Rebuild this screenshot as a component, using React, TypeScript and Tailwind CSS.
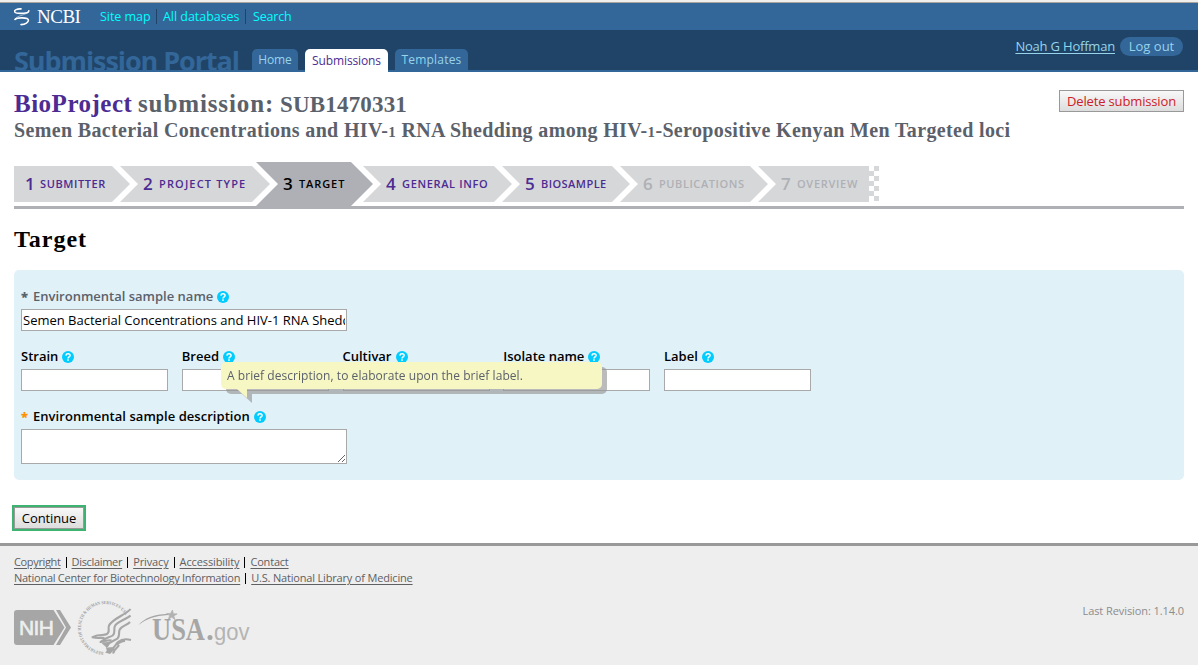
import type { ReactNode } from 'react';

function Help() {
  return (
    <svg className="ml-1 h-3 w-3 shrink-0" viewBox="0 0 12 12">
      <circle cx="6" cy="6" r="6" fill="#00ccff" />
      <path d="M3.9 4.6C4 3.4 4.9 2.8 6 2.8s2.1.7 2.1 1.8c0 1.3-2 1.4-2.1 2.9" fill="none" stroke="#fff" strokeWidth="1.5" />
      <rect x="5.2" y="8.3" width="1.6" height="1.5" fill="#fff" />
    </svg>
  );
}

function Label({ children, className = '' }: { children: ReactNode; className?: string }) {
  return (
    <label className={`flex h-4 items-center text-[13px] font-semibold whitespace-nowrap ${className}`}>
      <span className="flex h-4 pb-px leading-[15px]">{children}</span>
      <Help />
    </label>
  );
}

const field = 'block h-[22px] border border-[#a9a9a9] bg-white px-px text-[13px] outline-none';

const steps = [
  { n: 1, label: 'Submitter', box: 'h-9 w-[116px] pl-[11px] bg-[#d6d7d9] text-[#4c2c92] [clip-path:polygon(0_0,98px_0,116px_50%,98px_100%,0_100%)]', num: 'w-[15px]', track: 'tracking-[0.6px]' },
  { n: 2, label: 'Project type', box: '-ml-[10px] h-9 w-[150px] pl-[23px] bg-[#d6d7d9] text-[#4c2c92] [clip-path:polygon(0_0,132px_0,150px_50%,132px_100%,0_100%,18px_50%)]', num: 'w-4', track: 'tracking-[1.15px]' },
  { n: 3, label: 'Target', box: '-ml-[14px] h-11 w-[117px] pl-[27px] bg-[#aeb0b5] text-black [clip-path:polygon(0_0,95px_0,117px_50%,95px_100%,0_100%,22px_50%)]', num: 'w-[16px]', track: 'tracking-[0.9px]' },
  { n: 4, label: 'General info', box: '-ml-[10px] h-9 w-[149px] pl-[23px] bg-[#d6d7d9] text-[#4c2c92] [clip-path:polygon(0_0,131px_0,149px_50%,131px_100%,0_100%,18px_50%)]', num: 'w-4', track: 'tracking-[0.65px]' },
  { n: 5, label: 'BioSample', box: '-ml-[10px] h-9 w-[128px] pl-[23px] bg-[#d6d7d9] text-[#4c2c92] [clip-path:polygon(0_0,110px_0,128px_50%,110px_100%,0_100%,18px_50%)]', num: 'w-4', track: 'tracking-[0.45px]' },
  { n: 6, label: 'Publications', box: '-ml-[10px] h-9 w-[148px] pl-[23px] bg-[#d6d7d9] text-[#aeb0b5] [clip-path:polygon(0_0,130px_0,148px_50%,130px_100%,0_100%,18px_50%)]', num: 'w-4', track: 'tracking-[0.57px]' },
  { n: 7, label: 'Overview', box: '-ml-[10px] h-9 w-[111px] pl-[23px] bg-[#d6d7d9] text-[#aeb0b5] [clip-path:polygon(0_0,100%_0,100%_100%,0_100%,18px_50%)]', num: 'w-4', track: 'tracking-[0.7px]' },
];

const attributes = ['Strain', 'Breed', 'Cultivar', 'Isolate name', 'Label'];

function NcbiLogo() {
  return (
    <div className="flex w-[68px] items-center">
      <svg className="h-[18px] w-4" viewBox="0 0 16 18" fill="none" stroke="#fff" strokeLinecap="round">
        <path d="M7 .9C3 .6.2 2.200.6 3.600c.5 1.800 5.600 1.900 9 1.700 2.800-.2 5-.8 5.200-2.500" strokeWidth="1.600" />
        <path d="M14.800 3C14.500 7.500 1.500 7 1 11.500" strokeWidth="0.500" />
        <path d="M1 11.500c2-2.300 13-2.200 13.400.5.3 2.300-3 4.500-7.400 4.600" strokeWidth="1.600" />
      </svg>
      <span className="ml-[7px] font-['Liberation_Serif',serif] text-[19px] leading-5 tracking-[-0.5px] text-white">NCBI</span>
    </div>
  );
}

function Seal() {
  return (
    <svg className="ml-[5px] h-14 w-[56px]" viewBox="76 599 56 56">
      <defs>
        <path id="ring" d="M103.400 651.900A24 24 0 1 1 124.600 614.200" />
      </defs>
      <text className="font-['Liberation_Serif',serif]" fontSize="4.600" fontWeight="700" fill="#9c9c9c">
        <textPath href="#ring" textLength="98" lengthAdjust="spacingAndGlyphs">DEPARTMENT OF HEALTH &amp; HUMAN SERVICES·USA</textPath>
      </text>
      <g fill="none" stroke="#a6a6a6" strokeWidth="2.100" strokeLinejoin="round">
        <path d="M130.500 609C127 614 112 619 109 625.500c-1.500 4 1.500 6-2 8.500-3.500 2.200-7-.5-14.500 3.200 5 1.500 8.500.2 12 .8" />
        <path d="M130.500 615.500c-4 4-14 6-15.800 11-1.200 4 1 6.500-2 9-3 2-6.500 1.500-12.200 6.500 5-.8 8-2.500 11-1.500" />
        <path d="M130 622c-3 3.500-9 4-10.500 8-1 4 .5 6-2 8.500-3 2.500-7.500 2-10.500 7.500" />
        <path d="M131 640c-5-1.500-10-.5-13 2-3.500 3-2 6-8 7.500M119 645c-1.500 3-5 4-6 8.500M125 641c-3 0-6 1.500-8 4" />
      </g>
      <path d="M101 642c4 1 7-.5 10-.5-2 2-2 5-4.500 6.500-1-2.500-4-3-5.500-6zM106 648c3-1 7-1 9 1l-5 5-5-1.500c2-1 2-2.500 1-4.500z" fill="#a6a6a6" />
    </svg>
  );
}

function FooterLinks({ links }: { links: { text: string; className: string }[] }) {
  return (
    <div className="flex h-4 items-center">
      {links.map((l, i) => (
        <span key={l.text} className="flex items-center">
          {i > 0 && <span className="mx-[5px] h-[11px] w-px bg-black" />}
          <a className={`whitespace-nowrap underline underline-offset-[1.500px] ${l.className}`}>{l.text}</a>
        </span>
      ))}
    </div>
  );
}

const lowOne = <span className="text-[15px]">1</span>;

export default function App() {
  return (
    <div className="flex h-[665px] w-[1198px] flex-col overflow-hidden bg-white font-['Open_Sans','Noto_Sans',sans-serif] text-[13px] text-black">
      <div className="h-[3px] border-b border-[#aaa49d] bg-[#f0efee]" />
      <div className="flex h-[27px] items-center bg-[#336699] pl-[14px] text-[12.500px] text-[#00ffff]">
        <NcbiLogo />
        <nav className="ml-[18px] flex items-center whitespace-nowrap">
          <a className="w-[50px] pt-0.5 tracking-[-0.05px]">Site map</a>
          <span className="mx-[6px] h-[15px] w-px bg-[#204467]" />
          <a className="w-[77px] pt-0.5 tracking-[-0.040px]">All databases</a>
          <span className="mr-[7px] ml-[5px] h-[15px] w-px bg-[#204467]" />
          <a className="pt-0.5 tracking-[-0.200px]">Search</a>
        </nav>
      </div>

      <header className="flex h-[42px] shrink-0 justify-between border-b-2 border-[#336699] bg-[#204467] pl-[14px]">
        <div className="flex h-[42px]">
          <div className="h-10 w-[238px] overflow-hidden">
            <h1 className="mt-3 text-[27px] leading-[38px] font-bold tracking-[-1.080px] whitespace-nowrap text-[#336699]">Submission Portal</h1>
          </div>
          <nav className="mt-[19px] flex items-start gap-[7px] text-[12px] leading-[21px] text-[#97d4ea]">
            <a className="h-[21px] w-[46px] rounded-t-[5px] bg-[#336699] text-center tracking-[-0.100px]">Home</a>
            <a className="h-[23px] w-[83px] rounded-t-[5px] bg-white text-center leading-[23px] tracking-[-0.120px] text-[#4c2c92]">Submissions</a>
            <a className="h-[21px] w-[73px] rounded-t-[5px] bg-[#336699] text-center tracking-[0.200px]">Templates</a>
          </nav>
        </div>
        <div className="mt-[7px] mr-[15px] flex h-[19px] items-center text-[#97d4ea]">
          <a className="mr-[5px] tracking-[-0.200px] whitespace-nowrap underline underline-offset-2">Noah G Hoffman</a>
          <a className="h-[19px] w-[63px] rounded-full bg-[#336699] text-center leading-[18px]">Log out</a>
        </div>
      </header>

      <main className="flex flex-col px-[14px]">
        <div className="flex justify-between pt-[18px]">
          <div className="font-['Liberation_Serif',serif] font-bold whitespace-nowrap text-[#5b616b]">
            <h2 className="flex h-[28px] items-baseline text-[25px] leading-[27px]">
              <span className="w-[124px] tracking-[0.500px] text-[#4c2c92]">BioProject</span>
              <span className="w-[142px] tracking-[0.880px]">submission:</span>
              <span className="text-[23px] tracking-[0.180px]">SUB1470331</span>
            </h2>
            <h3 className="h-6 text-[20px] leading-6 tracking-[0.348px]">
              Semen Bacterial Concentrations and HIV-{lowOne} RNA Shedding among HIV-{lowOne}-Seropositive Kenyan Men Targeted loci
            </h3>
          </div>
          <button className="h-[22px] w-[125px] border border-[#999] bg-linear-to-b from-[#f8f8f8] to-[#dddddd] text-[13px] leading-5 tracking-[-0.150px] text-[#cd2026]">
            Delete submission
          </button>
        </div>

        <div className="mt-5 border-b-[3px] border-[#aeb0b5]">
          <ol className="flex h-11 items-center">
            {steps.map((s) => (
              <li key={s.n} className={`flex shrink-0 items-center font-semibold whitespace-nowrap ${s.box}`}>
                <span className={`text-[17px] leading-9 ${s.num}`}>{s.n}</span>
                <span className={`text-[11px] leading-9 uppercase ${s.track}`}>{s.label}</span>
              </li>
            ))}
            <li className="h-9 w-[10px] shrink-0">
              <svg className="block h-9 w-[10px]" viewBox="0 0 10 36" fill="#d6d7d9">
                <path d="M5 0h5v5H5zM0 5h5v5H0zM5 10h5v5H5zM0 15h5v5H0zM5 20h5v5H5zM0 25h5v5H0zM5 30h5v5H5z" />
              </svg>
            </li>
          </ol>
        </div>

        <h2 className="mt-4 h-7 font-['Liberation_Serif',serif] text-[24px] leading-7 font-bold tracking-[1px]">Target</h2>

        <section className="mt-[17px] h-[210px] rounded-[5px] bg-[#e1f1f8] px-[7px] pt-[19px]">
          <Label className="text-[#5b616b]">
            <span className="w-3 font-extrabold">*</span>Environmental sample name
          </Label>
          <input className={`mt-1 w-[326px] ${field}`} defaultValue="Semen Bacterial Concentrations and HIV-1 RNA Shedding among HIV-1-Seropositive Kenyan Men Targeted loci" />
          <div className="mt-[18px] flex gap-[13.750px]">
            {attributes.map((a) => (
              <div key={a} className="w-[147px]">
                <Label>{a}</Label>
                <input className={`mt-1 w-[147px] ${field}`} />
              </div>
            ))}
          </div>
          <div className="relative mt-[18px]">
            <Label className="tracking-[0.050px]">
              <span className="w-3 font-extrabold text-[#ff9000]">*</span>Environmental sample description
            </Label>
            <textarea className="mt-1 block h-[35px] w-[326px] resize border border-[#a9a9a9] bg-white" />
            <div className="absolute -top-[47px] left-[200px] [filter:drop-shadow(5px_5px_0_rgba(150,150,150,0.65))]">
              <div className="h-[27px] w-[381px] rounded-[5px] bg-[#f7f7c3] pl-[6px] text-[12px] leading-[27px] tracking-[0.050px] whitespace-nowrap text-[#5b616b]">
                A brief description, to elaborate upon the brief label.
              </div>
              <div className="ml-4 h-[9px] w-[10px] bg-[#f7f7c3] [clip-path:polygon(0_0,100%_0,100%_100%)]" />
            </div>
          </div>
        </section>

        <button className="mt-[25px] -ml-[2px] h-[26px] w-[74px] border-2 border-[#3cb371] text-[13px]">
          <span className="block h-[22px] border border-[#999] bg-linear-to-b from-[#f8f8f8] to-[#dddddd] leading-5 tracking-[-0.100px]">Continue</span>
        </button>
      </main>

      <footer className="mt-3 flex flex-1 justify-between border-t-[3px] border-[#999999] bg-[#eeeeee] px-[14px] pt-2 text-[11px] leading-4 text-[#5f6062]">
        <div>
          <FooterLinks
            links={[
              { text: 'Copyright', className: 'tracking-[-0.350px]' },
              { text: 'Disclaimer', className: 'tracking-[-0.320px]' },
              { text: 'Privacy', className: 'tracking-[-0.120px]' },
              { text: 'Accessibility', className: 'tracking-[-0.120px]' },
              { text: 'Contact', className: 'tracking-[-0.200px]' },
            ]}
          />
          <FooterLinks
            links={[
              { text: 'National Center for Biotechnology Information', className: 'tracking-[-0.260px]' },
              { text: 'U.S. National Library of Medicine', className: 'tracking-[-0.180px]' },
            ]}
          />
          <div className="mt-[13px] flex h-14 items-center">
            <svg className="h-[35px] w-[57px]" viewBox="0 0 57 35">
              <path d="M3 0h36.500l11 17.500L39.500 35H3a3 3 0 0 1-3-3V3a3 3 0 0 1 3-3z" fill="#a6a6a6" />
              <path d="M42 0h4l11 17.500L46 35h-4l10-17.500z" fill="#a6a6a6" />
              <text x="5" y="25" className="font-['Liberation_Sans',sans-serif]" fontSize="21" textLength="35" stroke="#eee" strokeWidth=".6" fill="#eee">NIH</text>
            </svg>
            <Seal />
            <svg className="ml-[6px] h-[40px] w-[113px]" viewBox="138 607 113 40">
              <path d="M138.500 625c6-7 15-10.500 29.500-11.300v1.300c-13 .8-22 4-29.500 10z" fill="#a6a6a6" />
              <path d="M172.500 610l.8 3.700 3.900.2-3.400 2 1.200 3.800-3.200-2.600-3.500 2.300 1.300-3.800-3-2.100 3.900-.1z" fill="#b2b2b2" stroke="#b2b2b2" strokeWidth=".7" />
              <text x="152" y="640" className="font-['Liberation_Serif',serif]" fontSize="32" fontWeight="700" textLength="53" lengthAdjust="spacingAndGlyphs" fill="#a6a6a6">USA</text>
              <circle cx="210" cy="637.500" r="2.500" fill="#a6a6a6" />
              <text x="214" y="640" className="font-['Liberation_Sans',sans-serif]" fontSize="23.500" textLength="35.500" lengthAdjust="spacingAndGlyphs" fill="#b4b4b4">gov</text>
            </svg>
          </div>
        </div>
        <p className="mt-[49px] tracking-[-0.080px] whitespace-nowrap text-[#8c8c8c]">Last Revision: 1.14.0</p>
      </footer>
    </div>
  );
}
